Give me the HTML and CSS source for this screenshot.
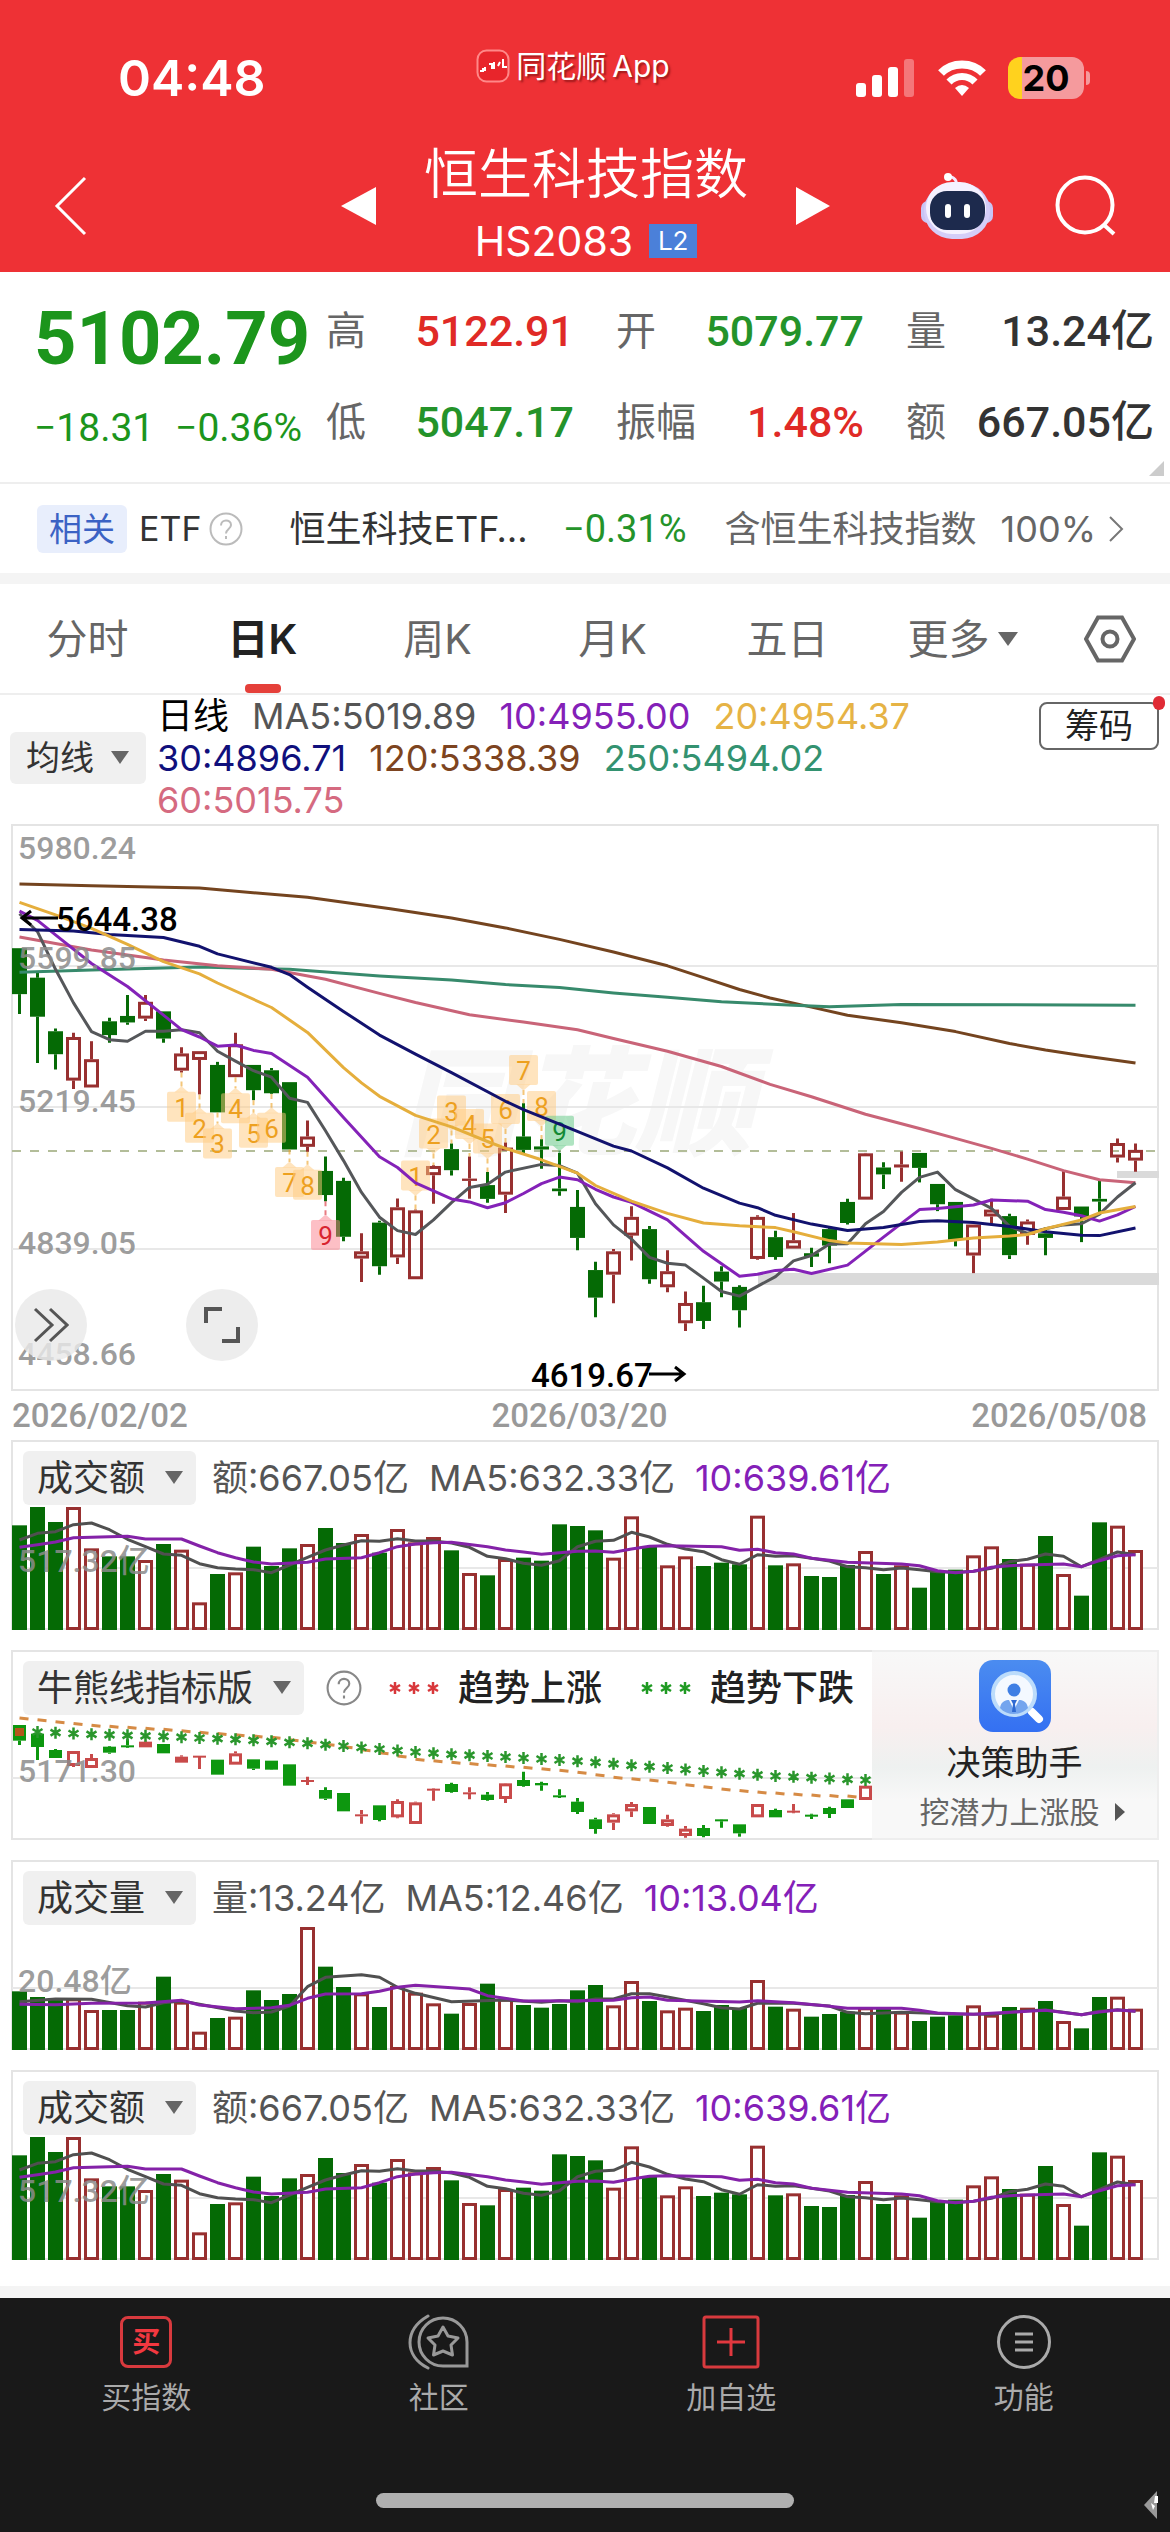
FILE: index.html
```html
<!DOCTYPE html>
<html lang="zh-CN">
<head>
<meta charset="utf-8">
<meta name="viewport" content="width=device-width, initial-scale=1">
<title>恒生科技指数 HS2083</title>
<link rel="stylesheet" href="styles.css">
</head>
<body>
<header class="top">
  <div class="status">
    <span class="clock">04:48</span>
    <span class="brand">
      <svg width="34" height="34" viewBox="0 0 34 34"><rect x="1.5" y="1.5" width="31" height="31" rx="9" fill="#e8252b" stroke="#f88" stroke-width="2"/><path d="M4 22h3v-3M9 22v-4M13 15h3v5M18 20v-7M22 17l2-4M27 10v8h4" stroke="#fff" stroke-width="2" fill="none"/></svg>
      <span>同花顺</span><span>App</span>
    </span>
    <span class="system">
      <svg width="60" height="40" viewBox="0 0 60 40"><rect x="0" y="25" width="10" height="14" rx="3" fill="#fff"/><rect x="16" y="17" width="10" height="22" rx="3" fill="#fff"/><rect x="32" y="9" width="10" height="30" rx="3" fill="#fff"/><rect x="48" y="1" width="10" height="38" rx="3" fill="#f4777a"/></svg>
      <svg width="50" height="40" viewBox="0 0 50 40"><path d="M4 15C15 3.500 35 3.500 46 15" stroke="#fff" stroke-width="8" fill="none"/><path d="M12 24C19 16.500 31 16.500 38 24" stroke="#fff" stroke-width="7" fill="none"/><path d="M18 30q7-6 14 0l-7 8z" fill="#fff"/></svg>
      <span class="battery"><b>20</b></span>
    </span>
  </div>
  <nav class="titlebar">
    <button class="bare back" aria-label="返回"><svg width="34" height="60" viewBox="0 0 34 60"><path d="M31 2L3 30l28 28" fill="none" stroke="#fff" stroke-width="3"/></svg></button>
    <button class="bare" aria-label="上一个"><svg width="36" height="40" viewBox="0 0 36 40"><path d="M35 1v38L0 20z" fill="#fff"/></svg></button>
    <div class="title">
      <h1>恒生科技指数</h1>
      <p><span>HS2083</span><span class="level">L2</span></p>
    </div>
    <button class="bare" aria-label="下一个"><svg width="36" height="40" viewBox="0 0 36 40"><path d="M1 1v38l34-19z" fill="#fff"/></svg></button>
    <div class="tools">
      <button class="bare" aria-label="智能助手"><svg width="74" height="68" viewBox="0 0 74 68"><path d="M36 14C38 6 30 4 29 5" fill="none" stroke="#f3e9ff" stroke-width="3"/><circle cx="28" cy="5" r="4" fill="#fff"/><rect x="1" y="29" width="14" height="22" rx="7" fill="#c9c4f5"/><rect x="59" y="29" width="14" height="22" rx="7" fill="#c9c4f5"/><rect x="4" y="11" width="66" height="56" rx="28" fill="#d4cdf8"/><rect x="6" y="10" width="60" height="52" rx="26" fill="#f5f1ff"/><rect x="10" y="19" width="55" height="39" rx="17" fill="#1d2a4d"/><rect x="25" y="32" width="6" height="14" rx="3" fill="#fff"/><rect x="44" y="32" width="6" height="14" rx="3" fill="#fff"/></svg></button>
      <button class="bare" aria-label="搜索"><svg width="64" height="64" viewBox="0 0 64 64"><circle cx="31" cy="31" r="27.500" fill="none" stroke="#fff" stroke-width="4"/><path d="M49 50l11 10" stroke="#fff" stroke-width="4"/></svg></button>
    </div>
  </nav>
</header>

<main>
  <section class="quote">
    <div class="last">
      <strong>5102.79</strong>
      <p><span>−18.31</span><span>−0.36%</span></p>
    </div>
    <dl class="stats">
      <div><dt>高</dt><dd class="up">5122.91</dd></div>
      <div><dt>开</dt><dd class="down">5079.77</dd></div>
      <div><dt>量</dt><dd>13.24亿</dd></div>
      <div><dt>低</dt><dd class="down">5047.17</dd></div>
      <div><dt>振幅</dt><dd class="up">1.48%</dd></div>
      <div><dt>额</dt><dd>667.05亿</dd></div>
    </dl>
    <svg class="corner" width="15" height="15" viewBox="0 0 15 15"><path d="M15 0v15H0z" fill="#ccc"/></svg>
  </section>

  <a class="related" href="#etf">
    <span class="chip">相关</span>
    <span class="etf">ETF</span>
    <svg class="help" width="34" height="34" viewBox="0 0 34 34"><circle cx="17" cy="17" r="15.500" fill="none" stroke="#bbb" stroke-width="2"/><path d="M12 13.500c0-7 10-6.500 10-.5 0 4-5 4-5 8.500M17 24v3" fill="none" stroke="#bbb" stroke-width="2"/></svg>
    <span class="fund">恒生科技ETF…</span>
    <span class="pct">−0.31%</span>
    <span class="weight">含恒生科技指数</span>
    <span class="share">100%</span>
    <svg width="16" height="26" viewBox="0 0 16 26"><path d="M2 1l12 12L2 25" fill="none" stroke="#777" stroke-width="2"/></svg>
  </a>

  <nav class="tabs">
    <button>分时</button>
    <button class="on" aria-current="true">日K</button>
    <button>周K</button>
    <button>月K</button>
    <button>五日</button>
    <button>更多<svg width="20" height="14" viewBox="0 0 20 14"><path d="M0 0h20L10 14z" fill="#666"/></svg></button>
    <button aria-label="设置"><svg width="52" height="48" viewBox="0 0 52 48"><path d="M14 2.500h24L50 24 38 45.500H14L2 24z" fill="none" stroke="#666" stroke-width="4"/><circle cx="26" cy="24" r="7.500" fill="none" stroke="#666" stroke-width="4"/></svg></button>
  </nav>

  <section class="averages">
    <label class="picker small"><select aria-label="主图指标"><option>均线</option></select><svg width="20" height="14" viewBox="0 0 20 14"><path d="M1 0h18l-9 13z"/></svg></label>
    <div class="legend">
      <div><span class="black">日线</span><span class="c5">MA5:5019.89</span><span class="c10">10:4955.00</span><span class="c20">20:4954.37</span></div>
      <div><span class="c30">30:4896.71</span><span class="c120">120:5338.39</span><span class="c250">250:5494.02</span></div>
      <div><span class="c60">60:5015.75</span></div>
    </div>
    <button class="chips">筹码</button>
  </section>

  <section class="charts">
    <figure class="kline">
      <svg class="plot" viewBox="0 0 1148 567">
        <rect class="frame" x="1" y="1" width="1146" height="565"/>
        <text class="mark" x="388" y="322">同花顺</text>
        <path class="grid" d="M1 142h1146M1 283h1146M1 425h1146"/>
        <rect x="747" y="449" width="401" height="12" fill="#dadada"/>
        <rect x="1106" y="347" width="42" height="7" fill="#dadada"/>
        <path d="M1 327h1146" stroke="#b3bd99" stroke-width="2" stroke-dasharray="9 9"/>
        <g id="candles"></g>
        <g class="axis"><text x="7" y="35">5980.24</text><text x="7" y="145">5599.85</text><text x="7" y="288">5219.45</text><text x="7" y="430">4839.05</text><text x="7" y="541">4458.66</text></g>
        <g class="extreme"><text x="45" y="107">5644.38</text><path d="M47 94H11M20 87l-9 7 9 7"/><text x="520" y="563">4619.67</text><path d="M638 550h35M664 543l9 7-9 7"/></g>
      </svg>
      <button class="round fast" aria-label="展开"><svg width="36" height="36" viewBox="0 0 36 36"><path d="M2 2l17 16L2 34M17 2l17 16-17 16"/></svg></button>
      <button class="round full" aria-label="全屏"><svg width="38" height="38" viewBox="0 0 38 38"><path class="thick" d="M3 17V3h16M35 21v14H19"/></svg></button>
    </figure>
    <div class="dates"><span>2026/02/02</span><span>2026/03/20</span><span>2026/05/08</span></div>

    <figure class="panel">
      <svg class="plot" viewBox="0 0 1148 190"><rect class="frame" x="1" y="1" width="1146" height="188"/><path class="grid" d="M1 128h1146"/><g class="amount"></g><text class="axis" x="7" y="132">517.32亿</text></svg>
      <figcaption>
        <label class="picker"><select aria-label="副图一指标"><option>成交额</option></select><svg width="20" height="14" viewBox="0 0 20 14"><path d="M1 0h18l-9 13z"/></svg></label>
        <span class="c5">额:667.05亿</span><span class="c5">MA5:632.33亿</span><span class="c10">10:639.61亿</span>
      </figcaption>
    </figure>

    <figure class="panel">
      <svg class="plot" viewBox="0 0 1148 190"><rect class="frame" x="1" y="1" width="1146" height="188"/><path class="grid" d="M1 128h1146"/><g id="trend"></g><text class="axis" x="7" y="132">5171.30</text></svg>
      <figcaption class="signals">
        <label class="picker"><select aria-label="副图二指标"><option>牛熊线指标版</option></select><svg width="20" height="14" viewBox="0 0 20 14"><path d="M1 0h18l-9 13z"/></svg></label>
        <svg class="hint" width="36" height="36" viewBox="0 0 34 34"><circle cx="17" cy="17" r="15.500" fill="none" stroke="#888" stroke-width="2"/><path d="M12 13.500c0-7 10-6.500 10-.5 0 4-5 4-5 8.500M17 24v3" fill="none" stroke="#888" stroke-width="2"/></svg>
        <svg class="stars" width="52" height="16" viewBox="0 0 52 16" data-color="#d8373a"></svg><span class="dark">趋势上涨</span>
        <svg class="stars second" width="52" height="16" viewBox="0 0 52 16" data-color="#1f9a22"></svg><span class="dark">趋势下跌</span>
      </figcaption>
      <a class="helper" href="#helper">
        <svg width="72" height="72" viewBox="0 0 72 72"><defs><linearGradient id="blue" x2="0" y2="1"><stop offset="0" stop-color="#4b8cf0"/><stop offset="1" stop-color="#3470f2"/></linearGradient></defs><rect width="72" height="72" rx="14" fill="url(#blue)"/><path d="M53 52l7 7" stroke="#fff" stroke-width="8" stroke-linecap="round"/><circle cx="35" cy="34" r="21" fill="#f4f9ff" stroke="#bcdcfb" stroke-width="4"/><circle cx="35" cy="30" r="6.500" fill="#3f7fe4"/><path d="M21 48c1-7 6-8 9-8l5 10 5-10c3 0 8 1 9 8-7 8-21 8-28 0z" fill="#74a5ee"/><path d="M32 40h6l-2 4 1 8h-4l1-8z" fill="#2f6ad2"/></svg>
        <span class="helper-name">决策助手</span>
        <span class="helper-note">挖潜力上涨股<svg width="12" height="18" viewBox="0 0 12 18"><path d="M1 0l10 9L1 18z" fill="#555"/></svg></span>
      </a>
    </figure>

    <figure class="panel">
      <svg class="plot" viewBox="0 0 1148 190"><rect class="frame" x="1" y="1" width="1146" height="188"/><path class="grid" d="M1 128h1146"/><g class="volume"></g><text class="axis" x="7" y="132">20.48亿</text></svg>
      <figcaption>
        <label class="picker"><select aria-label="副图三指标"><option>成交量</option></select><svg width="20" height="14" viewBox="0 0 20 14"><path d="M1 0h18l-9 13z"/></svg></label>
        <span class="c5">量:13.24亿</span><span class="c5">MA5:12.46亿</span><span class="c10">10:13.04亿</span>
      </figcaption>
    </figure>

    <figure class="panel">
      <svg class="plot" viewBox="0 0 1148 190"><rect class="frame" x="1" y="1" width="1146" height="188"/><path class="grid" d="M1 128h1146"/><g class="amount"></g><text class="axis" x="7" y="132">517.32亿</text></svg>
      <figcaption>
        <label class="picker"><select aria-label="副图四指标"><option>成交额</option></select><svg width="20" height="14" viewBox="0 0 20 14"><path d="M1 0h18l-9 13z"/></svg></label>
        <span class="c5">额:667.05亿</span><span class="c5">MA5:632.33亿</span><span class="c10">10:639.61亿</span>
      </figcaption>
    </figure>
  </section>
</main>

<footer class="dock">
  <nav>
    <a href="#buy"><span class="buy">买</span>买指数</a>
    <a href="#community"><svg width="62" height="56" viewBox="0 0 62 56"><path d="M20 2C-4 16-4 42 20 54" fill="none" stroke="#999" stroke-width="3" stroke-linecap="round"/><path d="M59 52H35a24 24 0 1 1 24-24z" fill="none" stroke="#999" stroke-width="3"/><path d="M35 13l5 9 10 2-7 7 1.500 10L35 37l-9.500 4L27 31l-7-7 10-2z" fill="none" stroke="#999" stroke-width="3" stroke-linejoin="round"/></svg>社区</a>
    <a href="#add"><svg width="60" height="56" viewBox="0 0 60 56"><rect x="3" y="3" width="54" height="50" rx="2" fill="none" stroke="#d83a3e" stroke-width="3"/><path d="M30 14v28M16 28h28" stroke="#e2383f" stroke-width="3"/></svg>加自选</a>
    <a href="#more"><svg width="56" height="56" viewBox="0 0 56 56"><circle cx="28" cy="28" r="25.500" fill="none" stroke="#aaa" stroke-width="3"/><path d="M19 20h18M19 28h18M19 36h18" stroke="#aaa" stroke-width="3"/></svg>功能</a>
  </nav>
  <div class="home"></div>
  <svg class="spark" width="14" height="28" viewBox="0 0 14 28"><path d="M13 0v28L0 14z" fill="#999"/><path d="M11 5h3v7h-4zM7 12l4 3-2 4z" fill="#fff"/></svg>
</footer>
<script src="chart.js"></script>
</body>
</html>
```
FILE: styles.css
```css
* { box-sizing: border-box; margin: 0; padding: 0; }
body { background: #fff; color: #333; font-family: Inter, "Noto Sans CJK SC", sans-serif; font-size: 34px; line-height: 42px; }
button, select { font: inherit; color: inherit; border: 0; background: none; }
a { color: inherit; text-decoration: none; }
svg { flex: none; }

.top { background: #ee3135; color: #fff; padding-top: 46px; }
.status { display: grid; grid-template-columns: 1fr auto 1fr; padding: 0 86px 0 118px; height: 64px; }
.clock { font-size: 50px; font-weight: 600; line-height: 64px; }
.brand { display: flex; gap: 6px; align-items: center; font-size: 30px; height: 40px; text-shadow: 2px 2px 2px rgba(80, 0, 0, .5); margin-left: -56px; }
.system { display: flex; gap: 21px; justify-content: flex-end; align-items: center; }
.battery { width: 76px; height: 42px; border-radius: 12px; background: linear-gradient(90deg, #ffd21e 14px, #f59a9d 14px); color: #000; font-size: 36px; line-height: 42px; text-align: center; position: relative; }
.battery::after { content: ""; position: absolute; right: -6px; top: 14px; width: 4px; height: 14px; border-radius: 0 4px 4px 0; background: #f59a9d; }
.bare { display: flex; align-items: center; justify-content: center; }
.titlebar { display: grid; grid-template-columns: 1fr 36px 418px 36px 1fr; align-items: center; padding: 24px 52px 0 54px; height: 162px; }
.back { justify-self: start; }
.title { text-align: center; }
.titlebar > .bare, .tools { margin-top: 6px; }
.tools { display: flex; justify-content: flex-end; gap: 60px; }
h1 { font-size: 54px; font-weight: 350; line-height: 76px; }
.title p { display: flex; gap: 16px; justify-content: center; align-items: center; font-size: 41px; line-height: 56px; }
.level { background: #4b80d9; font-size: 26px; line-height: 34px; width: 48px; }

.quote { display: flex; gap: 24px; padding: 14px 16px 14px 34px; border-bottom: 2px solid #eee; position: relative; font-family: Roboto, "Noto Sans CJK SC", sans-serif; }
.last { width: 268px; color: #1c951c; white-space: nowrap; display: flex; flex-direction: column; gap: 4px; padding-top: 8px; }
.last strong { font-size: 74px; line-height: 90px; font-weight: 700; }
.last p { display: flex; justify-content: space-between; font-size: 39px; line-height: 80px; }
.stats { flex: 1; display: grid; grid-template-columns: repeat(3, 1fr); column-gap: 42px; font-size: 43px; line-height: 91px; }
.stats div { display: flex; justify-content: space-between; white-space: nowrap; }
.stats dt { font-size: 40px; color: #666; }
.stats dd { font-weight: 500; }
.up { color: #e02a26; }
.down { color: #24932a; }
.corner { position: absolute; right: 6px; bottom: 6px; }

.related { display: flex; align-items: center; height: 89px; padding: 0 46px 0 37px; white-space: nowrap; }
.chip { background: #e8eefc; color: #3b62c4; border-radius: 6px; padding: 0 12px; line-height: 48px; font-size: 33px; margin-right: 12px; }
.help { margin: 0 46px 0 8px; }
.fund, .weight { font-size: 36px; }
.fund { flex: 1; }
.weight, .share { color: #666; }
.weight { margin: 0 24px 0 38px; }
.share { margin-right: 12px; font-size: 36px; }
.pct { color: #24932a; font: 38px Roboto, sans-serif; }

.tabs { display: grid; grid-template-columns: repeat(6, 35fr) 24fr; border-top: 11px solid #f4f4f4; border-bottom: 2px solid #eee; font-size: 41px; color: #666; }
.tabs button { display: flex; align-items: center; justify-content: center; gap: 8px; height: 109px; position: relative; }
.tabs .on { color: #222; font-weight: 600; }
.tabs .on::after { content: ""; position: absolute; bottom: 0; width: 36px; height: 9px; border-radius: 4px; background: #e5403a; }

.averages { display: flex; gap: 11px; align-items: center; padding: 0 11px 3px 10px; }
.picker { display: inline-flex; align-items: center; background: #f0f0f0; border-radius: 6px; gap: 18px; height: 54px; padding: 0 12px 0 14px; font-size: 36px; color: #333; }
.picker select { appearance: none; height: 54px; }
.picker path { fill: #666; }
.small { font-size: 34px; height: 52px; padding: 0 16px; gap: 16px; }
.legend { flex: 1; white-space: nowrap; font-size: 36px; }
.legend div { display: flex; gap: 23px; }
.chips { align-self: flex-start; margin-top: 7px; width: 120px; height: 48px; line-height: 44px; border: 2px solid #666; border-radius: 8px; position: relative; color: #222; }
.chips::after { content: ""; position: absolute; right: -8px; top: -8px; width: 12px; height: 14px; border-radius: 6px; background: #e02b35; }
.black { color: #000; }
.dark { color: #222; font-weight: 500; }
.c5 { color: #555; }
.c10 { color: #8420b8; }
.c20 { color: #e6b345; }
.c30 { color: #10107c; }
.c60 { color: #d56a80; }
.c120 { color: #7d4420; }
.c250 { color: #339270; }

.charts { padding: 0 11px 26px; }
.plot { display: block; width: 100%; height: auto; grid-area: 1 / 1; overflow: visible; }
.frame { fill: none; stroke: #e4e4e4; stroke-width: 2; }
.grid { fill: none; stroke: #e8e8e8; stroke-width: 2; }
.axis { font: 500 32px Roboto, "Noto Sans CJK SC", sans-serif; fill: #8c8c8c; fill-opacity: .85; }
.extreme { font: 500 33px Roboto, sans-serif; }
.extreme path { fill: none; stroke: #000; stroke-width: 3; }
.mark { font: italic 900 118px "Noto Sans CJK SC", sans-serif; fill: #f7f7f7; }
.tag { font: 26px Roboto, sans-serif; text-anchor: middle; }
.kline { position: relative; }
.round { position: absolute; bottom: 30px; width: 72px; height: 72px; border-radius: 50%; background: rgba(233, 233, 233, .82); display: flex; align-items: center; justify-content: center; }
.round path { fill: none; stroke: #555; stroke-width: 3; }
.round .thick { stroke-width: 4; }
.fast { left: 4px; }
.full { left: 175px; }
.dates { display: flex; justify-content: space-between; padding: 0 12px 0 1px; font: 500 33px/49px Roboto, sans-serif; color: #999; }

.panel { display: grid; }
.panel + .panel { margin-top: 20px; }
figcaption { grid-area: 1 / 1; align-self: start; display: flex; gap: 20px; align-items: center; padding: 11px 0 0 12px; white-space: nowrap; font-size: 36px; }
.picker + span { margin-left: -4px; }
.signals { gap: 18px; }
.signals .hint { margin: 0 8px 0 4px; }
.second { margin-left: 20px; }
.helper { grid-area: 1 / 1; justify-self: end; width: 25%; display: flex; flex-direction: column; align-items: center; padding-top: 8px; background: linear-gradient(#f8f8f8, #f8efef 40%, #eef1f0 62%, #f8f8f8 80%); border: 2px solid #eee; border-left: 0; z-index: 1; }
.helper-name { font-size: 34px; line-height: 62px; color: #222; }
.helper-note { display: flex; align-items: center; gap: 14px; font-size: 30px; line-height: 36px; color: #666; padding-left: 16px; }

.dock { background: #191919; border-top: 12px solid #f4f4f4; color: #aaa; padding: 16px 0 24px; position: relative; }
.dock nav { display: grid; grid-template-columns: repeat(4, 1fr); }
.dock a { display: flex; flex-direction: column; align-items: center; gap: 6px; font-size: 30px; line-height: 42px; }
.buy { width: 52px; height: 52px; margin: 2px 0; border: 3px solid #d83a3e; border-radius: 8px; color: #f33840; font-weight: 700; font-size: 28px; line-height: 46px; text-align: center; }
.home { width: 418px; height: 15px; margin: 75px auto 0; border-radius: 8px; background: #b0b0b0; }
.spark { position: absolute; right: 12px; bottom: 13px; }
```
FILE: chart.js
```js
const RED = '#983030', GREEN = '#056a05';
const cx = i => 8.5 + 18 * i;
const byNumber = text => text.trim().split(/\s+/).map(p => p.split(':').map(Number));
const path = (text, y) => 'M' + byNumber(text).map(([i, v]) => cx(i).toFixed(1) + ' ' + y(v).toFixed(1)).join('L');
const line = (text, y, color) => `<path d="${path(text, y)}" fill="none" stroke="${color}" stroke-width="3" stroke-linejoin="round"/>`;

// each row: direction, high, body top, body bottom, low
function candle(row, i, y, w, up, down) {
  const [d, ...v] = row.split(',');
  const [h, t, b, l] = v.map(n => y(+n));
  const x = cx(i), color = d === 'r' ? up : down;
  const body = d === 'r' && b - t > 4
    ? `<rect x="${x - w / 2 + 1.5}" y="${t + 1.5}" width="${w - 3}" height="${b - t - 3}" fill="none" stroke="${color}" stroke-width="3"/>`
    : `<rect x="${x - w / 2}" y="${t}" width="${w}" height="${Math.max(b - t, 2)}" fill="${color}"/>`;
  return `<path d="M${x} ${h}V${t}M${x} ${b}V${l}" stroke="${color}" stroke-width="3"/>` + body;
}

const days = `g,335,335,455,507 g,400,412,514,635 g,545,552,612,652 r,556,567,681,703 r,578,625,699,699 g,517,526,562,582 g,457,512,529,535 r,457,475,519,525 g,500,500,571,582 r,594,610,655,660 r,604,604,627,717 g,632,640,764,764 r,556,586,672,672 g,640,640,706,732 g,648,654,714,716 g,685,685,861,861 r,785,827,854,867 g,879,917,980,996 g,935,943,1089,1101 r,1080,1127,1146,1207 g,1047,1052,1166,1188 r,989,1012,1143,1160 r,1018,1020,1200,1200 r,902,904,928,1003 g,845,860,915,929 r,879,937,943,990 g,920,954,990,1000 r,843,856,979,1027 g,740,827,862,873 g,834,853,861,911 g,870,963,970,982 g,967,1011,1092,1124 g,1154,1176,1248,1299 r,1121,1127,1188,1263 r,1009,1037,1086,1151 g,1061,1069,1200,1212 r,1124,1179,1221,1234 r,1232,1262,1315,1335 g,1217,1260,1309,1330 g,1166,1180,1206,1247 g,1216,1220,1281,1326 r,1033,1037,1147,1149 g,1073,1090,1142,1149 r,1027,1098,1120,1120 g,1118,1132,1141,1168 g,1065,1069,1112,1158 g,990,998,1053,1057 r,870,871,992,992 g,894,908,926,964 r,866,900,908,945 g,870,870,909,947 g,951,951,1004,1022 g,998,998,1097,1114 r,1057,1057,1138,1184 r,990,1018,1036,1057 g,1029,1035,1137,1147 r,1044,1049,1084,1110 g,1065,1080,1092,1137 r,917,984,1019,1019 g,1010,1010,1036,1103 g,943,990,997,1027 r,832,844,882,895 r,845,862,890,919`.split(' ');

const ky = v => v / 2.613 - 4;
const averages = [
  ['#74441f', '0:167 4:172 10:178 16:202 20.6:232 24:256 27:282 30:312 33:345 36:381 38:412 40:443 41.7:465 44:489 46:510 49:530 52:553 55:584 57:601 59:615 62:635'],
  ['#378a6c', '0:398 4:392 10:384 15:390 20:408 24:418 27:430 30:438 33:452 36:463 39:475 43:484 45:488 49:482 62:484'],
  ['#c96478', '0:306 4:340 8:366 11:381 14:390 17:416 20:453 22:477 25:509 28:528 31:548 33:571 36:604 39:644 41.7:691 44:723 47:769 50:806 52:832 54:858 56:886 58:916 60:940 62:948'],
  ['#55575a', '0:245 1:292 2:390 3:478 4:553 5:574 6:578 7:552 8:552 9:548 10:556 11:604 12:630 13:655 14:672 15:727 16:738 17:812 18:890 19:973 20:1038 21:1073 22:1083 23:1045 24:1000 25:960 26:952 27:920 29:900 30:903 31:923 32:1003 33:1058 34:1095 35:1143 36:1158 37:1163 38:1197 39:1232 40:1244 42:1193 43:1152 44:1138 45:1108 46:1107 47:1055 48:1023 49:973 50:934 51:920 52:966 53:990 54:1015 55:1062 56:1080 57:1068 58:1058 59:1055 60:1030 61:985 62:948'],
  ['#8422b8', '0:238 1:262 2:300 4:375 6:435 8:510 9:548 10:567 11:591 12:588 13:602 14:610 16:672 18:777 20:880 21:908 22:948 24:990 25:998 26:1013 27:1000 28:976 29:950 30:933 31:940 32:965 33:985 34:999 36:1045 38:1127 40:1192 41:1187 42:1177 43:1174 44:1185 46:1163 48:1090 50:1018 51:1015 53:1006 54:993 56:996 57:1018 58:1025 59:1034 60:1048 61:1032 62:1010'],
  ['#12126e', '0:286 3:290 5:299 8:307 10:330 11:350 14:385 15:404 16:437 18:500 20:562 22:612 24:660 27:735 28:757 30:795 33:852 34:865 36:909 38:962 40:1001 41:1013 42:1033 44:1056 46:1073 48:1065 50:1049 51:1047 53:1052 55:1062 57:1076 59:1085 60:1086 62:1066'],
  ['#e5ae3c', '0:215 2:248 4:283 6:325 8:370 10:402 11:426 14:490 16:555 18:647 19:687 20:722 22:772 24:802 26:840 27:858 29:888 31:923 32:955 34:996 36:1028 38:1053 40:1060 42:1065 43:1076 45:1099 46:1105 49:1109 51:1103 53:1092 55:1087 56:1083 57:1068 59:1045 60:1027 62:1010']
];

// nine-count tags: index, digit, box top, side of the candle
const tags = '9:1:710:1 10:2:765:1 11:3:806:1 12:4:714:1 13:5:778:1 14:6:765:1 15:7:907:1 16:8:914:1 17:9:1045:1 22:1:890:0 23:2:780:0 24:3:720:0 25:4:755:0 26:5:793:0 27:6:716:0 28:7:614:0 29:8:708:0 30:9:773:0';
const tagMarks = byNumber(tags).map(([i, n, top, below]) => {
  const x = cx(i), y = ky(top), v = days[i].split(',');
  const [bg, fg] = n < 9 ? ['#ffca7d', '#eda01f'] : below ? ['#fb7f8c', '#d8242f'] : ['#5fc983', '#148a35'];
  const tip = below ? `M${x - 7} ${y + .5}l7-6 7 6z` : `M${x - 7} ${y + 29.5}l7 6 7-6z`;
  const stem = below ? `M${x} ${ky(+v[4])}V${y - 5}` : `M${x} ${y + 35}V${ky(+v[1])}`;
  return `<path d="${stem}" stroke="${fg}" stroke-opacity=".6" stroke-width="2" stroke-dasharray="5 4"/><g fill="${bg}" fill-opacity=".5"><rect x="${x - 14.5}" y="${y}" width="29" height="30" rx="2"/><path d="${tip}"/></g><text class="tag" x="${x}" y="${y + 25}" fill="${fg}">${n}</text>`;
}).join('');

document.getElementById('candles').innerHTML =
  days.map((d, i) => candle(d, i, ky, 15, RED, GREEN)).join('') +
  tagMarks + averages.map(([c, t]) => line(t, ky, c)).join('');

const py = v => (v - 30) / 3;
function bars(tops, ma5, ma10) {
  return tops.split(' ').map((t, i) => {
    const x = cx(i) - 7.5, y = py(+t);
    return days[i][0] === 'r'
      ? `<rect x="${x + 1.5}" y="${y + 1.5}" width="12" height="${187 - y}" fill="#fff" stroke="${RED}" stroke-width="3"/>`
      : `<rect x="${x}" y="${y}" width="15" height="${190 - y}" fill="${GREEN}"/>`;
  }).join('') + line(ma5, py, '#505050') + line(ma10, py, '#8422a8');
}

const amount = bars('286 231 276 231 355 379 379 390 342 359 517 432 427 350 408 355 342 294 339 312 368 297 337 321 361 429 436 387 383 392 283 288 301 383 259 350 406 379 408 398 403 257 406 400 438 441 405 363 432 406 473 426 419 376 349 387 401 318 432 497 277 287 360',
  '0:330 1:310 2:305 3:284 4:279 5:299 6:328 7:350 8:372 9:376 10:401 11:413 12:417 13:419 14:428 15:405 16:382 17:360 18:345 19:332 20:334 21:326 22:333 23:333 24:339 25:352 26:379 27:386 28:400 29:406 30:392 31:350 32:334 33:331 34:307 35:321 36:343 37:357 38:365 39:389 40:403 41:374 42:379 43:377 44:385 45:393 46:410 47:413 48:419 49:414 50:419 51:425 52:427 53:424 54:415 55:395 56:388 57:372 58:379 59:410 60:388 61:366 62:374',
  '0:352 1:344 2:336 3:323 5:320 6:319 7:327 9:327 10:348 11:368 12:383 13:396 14:402 16:397 17:387 19:383 20:368 21:350 22:342 23:338 24:337 26:350 27:360 28:366 29:373 30:368 31:364 32:363 33:367 34:357 35:349 36:347 39:350 40:361 41:358 42:368 43:372 44:385 46:397 49:402 50:407 51:422 52:428 53:424 54:412 55:407 56:405 58:402 59:410 60:392 61:377 62:374');
document.querySelectorAll('.amount').forEach(g => { g.innerHTML = amount; });

document.querySelector('.volume').innerHTML = bars('424 441 445 445 480 480 480 455 380 455 545 504 500 421 450 432 231 350 411 430 471 408 428 460 491 459 401 446 465 473 462 421 405 466 393 453 481 473 483 465 474 390 470 476 500 492 485 472 474 485 513 500 496 466 494 471 473 453 513 535 441 440 476',
  '0:455 2:447 4:448 6:467 7:471 8:458 9:453 10:463 12:483 13:488 14:486 15:468 16:410 17:382 19:374 20:382 21:412 22:430 24:455 27:450 29:457 30:452 31:455 32:447 33:447 34:431 35:431 36:441 38:461 39:473 40:477 41:460 43:460 45:468 46:487 47:491 49:487 52:492 54:493 56:482 57:480 58:487 59:494 60:484 61:479 62:484',
  '0:463 2:464 4:460 7:459 9:451 10:465 12:476 14:473 15:466 16:445 17:432 19:431 20:424 21:412 22:406 25:417 26:437 28:453 31:452 33:451 34:443 35:441 36:451 40:456 41:452 43:458 45:469 46:475 49:475 50:481 51:489 53:493 56:484 57:481 59:494 60:486 61:480 62:484');

const star = (x, y, color) => `<path d="M${x} ${y - 6}v12M${x - 5} ${y - 3}l10 6M${x + 5} ${y - 3}l-10 6" stroke="${color}" stroke-width="2.500"/>`;
document.querySelectorAll('.stars').forEach(s => {
  s.innerHTML = [7, 26, 45].map(x => star(x, 8, s.dataset.color)).join('');
});

// value of a sparse series at a given day
function at(series, i) {
  const k = Math.max(1, series.findIndex(p => p[0] >= i));
  const [a, b] = [series[k - 1], series[k]];
  return a[1] + (b[1] - a[1]) * (i - a[0]) / (b[0] - a[0]);
}
const ty = v => (v - 660) / 3;
const trendDays = `g,885,885,932,945 g,905,911,951,990 g,957,960,984,984 r,963,963,1008,1011 r,972,984,1014,1014 g,948,950,968,971 g,928,946,952,954 r,932,935,952,952 g,942,942,970,970 r,976,980,998,998 r,977,977,981,1017 g,989,989,1034,1034 r,964,970,1004,1004 g,988,988,1016,1020 g,992,992,1019,1020 g,1003,1003,1067,1067 r,1040,1050,1056,1065 g,1072,1080,1106,1110 g,1089,1089,1144,1144 r,1140,1153,1159,1181 g,1126,1126,1170,1174 r,1108,1113,1162,1165 r,1115,1117,1182,1182 r,1075,1076,1081,1112 g,1058,1062,1086,1088 r,1072,1087,1092,1108 g,1086,1094,1110,1112 r,1059,1060,1107,1119 g,1025,1050,1068,1070 g,1055,1059,1066,1082 g,1078,1096,1101,1104 g,1104,1115,1146,1152 g,1163,1168,1197,1211 r,1150,1153,1178,1200 r,1116,1122,1144,1161 g,1131,1131,1182,1182 r,1154,1168,1188,1190 r,1188,1196,1218,1223 g,1185,1194,1218,1222 g,1167,1168,1174,1193 g,1183,1183,1210,1220 r,1122,1122,1162,1162 g,1136,1140,1162,1162 r,1122,1142,1147,1150 g,1151,1154,1159,1167 g,1130,1134,1152,1164 g,1108,1108,1134,1134 r,1067,1067,1110,1110`.split(' ');
const bear = byNumber('0:904 2:908 4:913 6:916 8:919 10:924 12:928 14:934 16:940 18:948 20:957 22:966 24:973 26:978 28:984 30:990 32:997 34:1006 36:1014 38:1023 40:1031 42:1038 44:1043 46:1048 47:1050');
const bull = byNumber('0:864 2:875 4:886 6:892 8:898 10:907 12:914 14:922 16:936 18:950 20:968 22:988 24:997 26:1004 28:1012 30:1021 31:1027 33:1042 35:1050 37:1064 39:1077 41:1086 44:1095 47:1100');
document.getElementById('trend').innerHTML = trendDays.map((d, i) => {
  const y = ty(at(bull, i));
  const dash = i < 47 ? `<path d="M${cx(i)} ${y}l9 1" stroke="#d68b45" stroke-width="3"/>` : '';
  const mark = i ? star(cx(i), ty(at(bear, i)), '#2a962c') : `<rect x="4" y="78" width="9" height="8" fill="#b4551c"/>`;
  return candle(d, i, ty, 13, '#c84a4a', '#0d970f') + dash + mark;
}).join('');
```
